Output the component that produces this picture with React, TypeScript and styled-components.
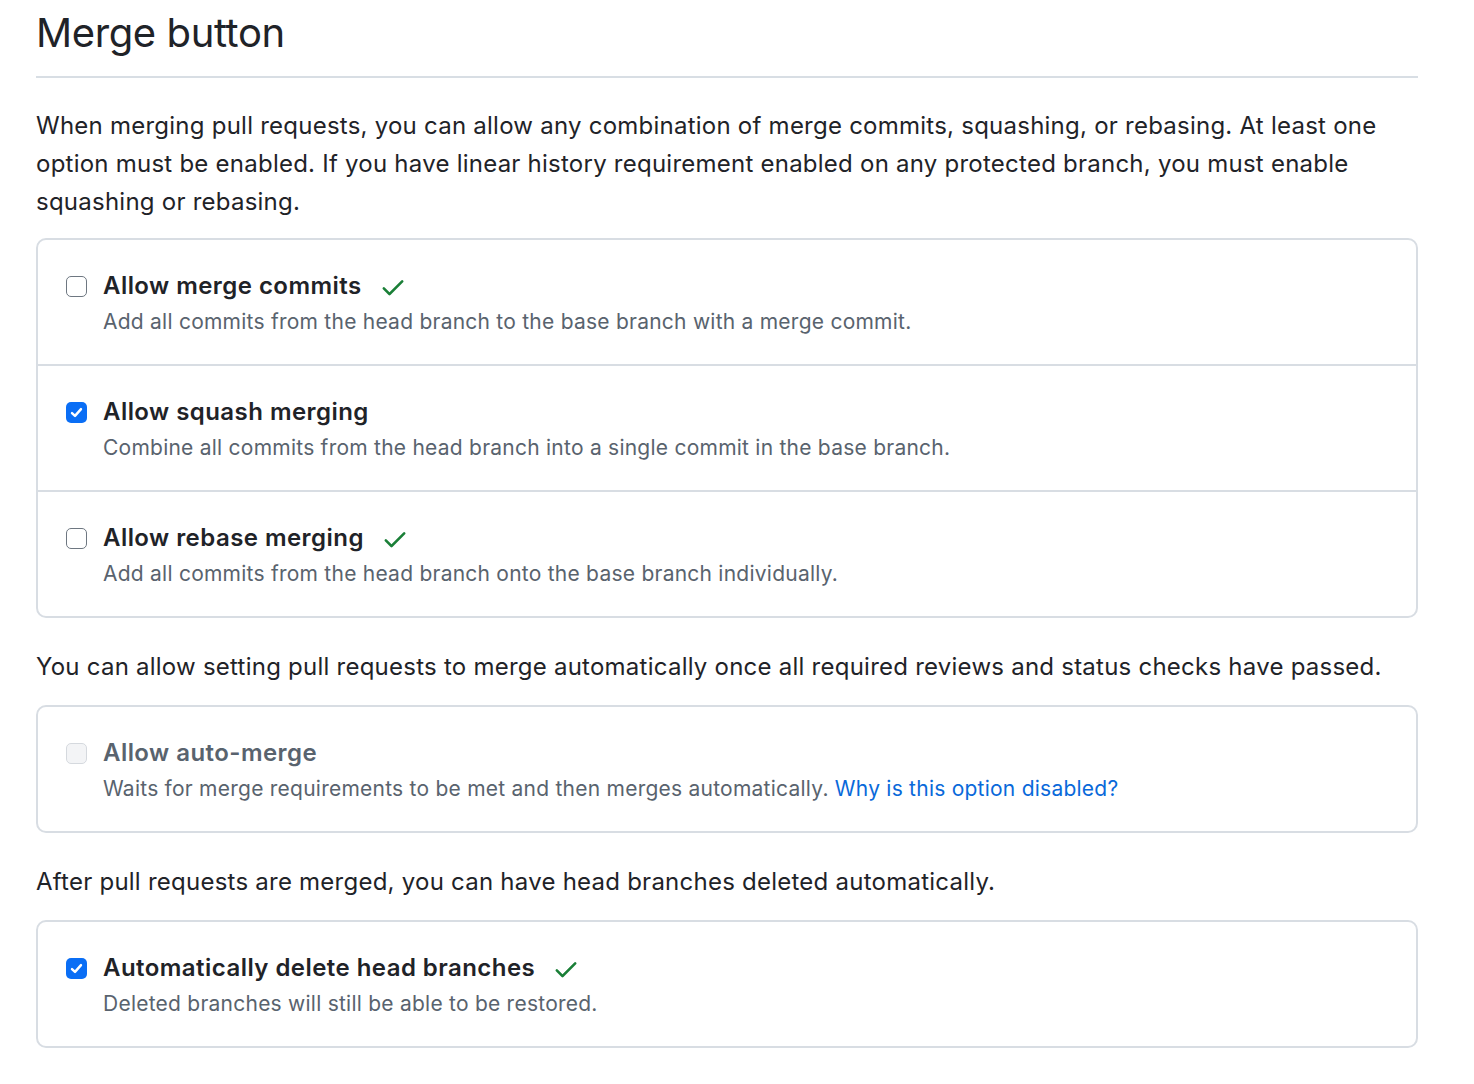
import React, { FC } from "react";
import styled, { createGlobalStyle } from "styled-components";

const GlobalStyle = createGlobalStyle`
  body {
    margin: 0;
    background: #fff;
    font-family: Inter, "Noto Sans", "Liberation Sans", sans-serif;
    color: #1f2328;
  }
`;

type Option = {
  title: string;
  desc: string;
  checked?: boolean;
  disabled?: boolean;
  done?: boolean;
  link?: string;
};

const mergeOptions: Option[] = [
  {
    title: "Allow merge commits",
    desc: "Add all commits from the head branch to the base branch with a merge commit.",
    done: true,
  },
  {
    title: "Allow squash merging",
    desc: "Combine all commits from the head branch into a single commit in the base branch.",
    checked: true,
  },
  {
    title: "Allow rebase merging",
    desc: "Add all commits from the head branch onto the base branch individually.",
    done: true,
  },
];

const CheckMark: FC = () => (
  <DoneIcon viewBox="0 0 16 16" width="28" height="28" aria-hidden>
    <path
      fill="currentColor"
      d="M13.78 4.22a.75.75 0 0 1 0 1.06l-7.25 7.25a.75.75 0 0 1-1.06 0L2.22 9.28a.751.751 0 0 1 .018-1.042.751.751 0 0 1 1.042-.018L6 10.94l6.72-6.72a.75.75 0 0 1 1.06 0Z"
    />
  </DoneIcon>
);

const Checkbox: FC<{ checked?: boolean; disabled?: boolean }> = ({ checked, disabled }) => (
  <Box $checked={checked} $disabled={disabled}>
    {checked && (
      <svg viewBox="0 0 16 16" width="15" height="15" aria-hidden>
        <path
          fill="none"
          stroke="#fff"
          strokeWidth="2.6"
          strokeLinecap="round"
          strokeLinejoin="round"
          d="M3.2 8.6 6.4 11.6 12.8 4.4"
        />
      </svg>
    )}
  </Box>
);

const OptionRow: FC<{ option: Option }> = ({ option }) => (
  <Row>
    <Checkbox checked={option.checked} disabled={option.disabled} />
    <RowBody>
      <Title $disabled={option.disabled}>
        {option.title}
        {option.done && <CheckMark />}
      </Title>
      <Desc>
        {option.desc}
        {option.link && <a href="#"> {option.link}</a>}
      </Desc>
    </RowBody>
  </Row>
);

const App: FC = () => {
  return (
    <Wrap>
      <GlobalStyle />
      <Heading>Merge button</Heading>
      <Text>
        When merging pull requests, you can allow any combination of merge commits, squashing, or
        rebasing. At least one option must be enabled. If you have linear history requirement enabled
        on any protected branch, you must enable squashing or rebasing.
      </Text>
      <Panel>
        {mergeOptions.map((o) => (
          <OptionRow key={o.title} option={o} />
        ))}
      </Panel>
      <Text>
        You can allow setting pull requests to merge automatically once all required reviews and
        status checks have passed.
      </Text>
      <Panel>
        <OptionRow
          option={{
            title: "Allow auto-merge",
            desc: "Waits for merge requirements to be met and then merges automatically.",
            disabled: true,
            link: "Why is this option disabled?",
          }}
        />
      </Panel>
      <Text>After pull requests are merged, you can have head branches deleted automatically.</Text>
      <Panel>
        <OptionRow
          option={{
            title: "Automatically delete head branches",
            desc: "Deleted branches will still be able to be restored.",
            checked: true,
            done: true,
          }}
        />
      </Panel>
    </Wrap>
  );
};

export default App;

const Wrap = styled.div`
  width: 1382px;
  padding: 0 36px 36px;
`;

const Heading = styled.h2`
  margin: 0;
  padding: 8px 0 18px;
  font-size: 40px;
  line-height: 50px;
  font-weight: 400;
  letter-spacing: -0.4px;
  border-bottom: 2px solid #d8dee4;
`;

const Text = styled.p`
  margin: 29px 0 17px;
  font-size: 24px;
  line-height: 38px;
  letter-spacing: 0.24px;
  color: #1f2328;
  div + & {
    margin-top: 30px;
    margin-bottom: 19px;
  }
`;

const Panel = styled.div`
  border: 2px solid #d8dde3;
  border-radius: 10px;
  overflow: hidden;
`;

const Row = styled.div`
  display: flex;
  align-items: flex-start;
  gap: 16px;
  padding: 28px 28px 24px;
  & + & {
    border-top: 2px solid #d8dde3;
  }
`;

const Box = styled.span<{ $checked?: boolean; $disabled?: boolean }>`
  flex: none;
  box-sizing: border-box;
  width: 21px;
  height: 21px;
  margin-top: 8px;
  border-radius: 5px;
  display: flex;
  align-items: center;
  justify-content: center;
  border: ${(p) =>
    p.$checked ? "none" : p.$disabled ? "1.5px solid #d5d9de" : "1.5px solid #6e7781"};
  background: ${(p) => (p.$checked ? "#0a6ef5" : p.$disabled ? "#f3f4f6" : "#fff")};
`;

const RowBody = styled.div`
  display: flex;
  flex-direction: column;
`;

const Title = styled.div<{ $disabled?: boolean }>`
  display: flex;
  align-items: center;
  gap: 17px;
  font-size: 24px;
  line-height: 36px;
  font-weight: 600;
  letter-spacing: 0.45px;
  color: ${(p) => (p.$disabled ? "#59636e" : "#1f2328")};
`;

const DoneIcon = styled.svg`
  color: #1a7f37;
  margin-top: 2px;
`;

const Desc = styled.div`
  font-size: 21px;
  line-height: 36px;
  letter-spacing: 0.24px;
  color: #59636e;
  a {
    color: #0969da;
    text-decoration: none;
  }
`;
